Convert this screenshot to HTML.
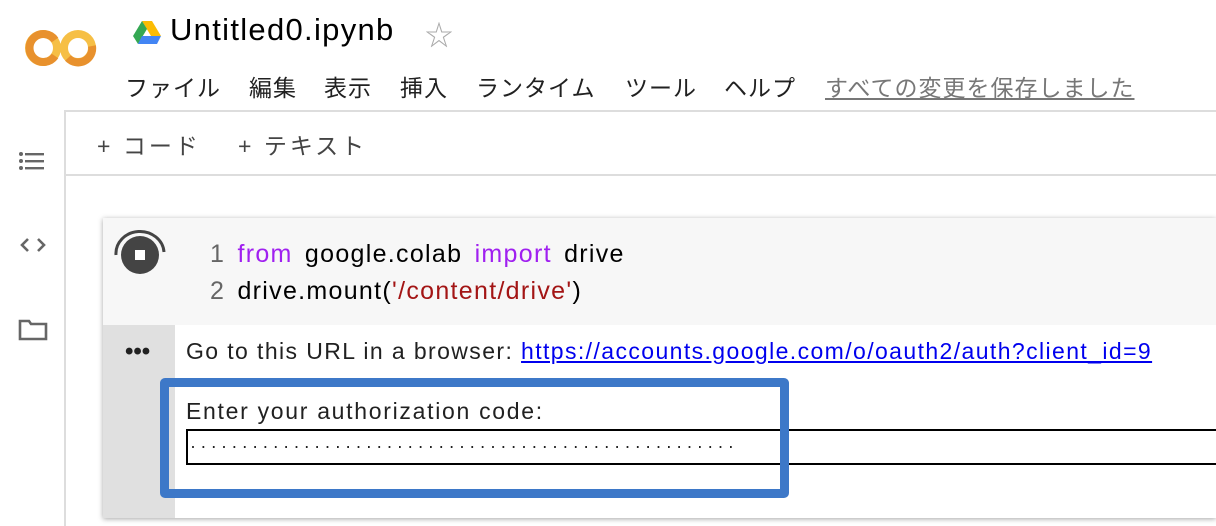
<!DOCTYPE html>
<html><head><meta charset="utf-8"><style>
*{margin:0;padding:0;box-sizing:border-box}
body{width:1216px;height:526px;overflow:hidden;background:#fff;position:relative;font-family:"Liberation Sans","Noto Sans CJK JP",sans-serif;color:#212121}
.a{position:absolute;white-space:nowrap}
.m{position:absolute;top:69px;font-size:23px;white-space:nowrap;letter-spacing:1px}
</style></head><body>
<svg class="a" style="left:22px;top:25px" width="78" height="46" viewBox="0 0 78 46">
<circle cx="21" cy="23" r="14" fill="none" stroke="#f6bf45" stroke-width="8"/>
<path d="M33 15 A14 14 0 1 0 33 31" fill="none" stroke="#e8912d" stroke-width="8"/>
<circle cx="56" cy="23" r="14" fill="none" stroke="#f6bf45" stroke-width="8"/>
<path d="M70 21 A14 14 0 0 1 46 33" fill="none" stroke="#e8912d" stroke-width="8"/>
</svg>
<svg class="a" style="left:132px;top:20px" width="30" height="24" viewBox="0 0 30 24">
<path d="M10 1h10l9 15h-10z" fill="#fbbc04"/><path d="M10 1L1 16l5 8 9-15z" fill="#34a853"/><path d="M6 24h19l4-8H10z" fill="#4285f4"/>
</svg>
<div class="a" style="left:170px;top:12px;font-size:31px;color:#000;letter-spacing:1.3px">Untitled0.ipynb</div>
<div class="a" style="left:425px;top:14px;font-size:28px;color:#aaa">☆</div>
<div class="m" style="left:125px">ファイル</div>
<div class="m" style="left:249px">編集</div>
<div class="m" style="left:324px">表示</div>
<div class="m" style="left:400px">挿入</div>
<div class="m" style="left:476px">ランタイム</div>
<div class="m" style="left:625px">ツール</div>
<div class="m" style="left:724px">ヘルプ</div>
<div class="m" style="left:825px;color:#777;text-decoration:underline">すべての変更を保存しました</div>
<div class="a" style="left:64px;top:110px;width:2px;height:416px;background:#ddd"></div>
<div class="a" style="left:64px;top:110px;width:1152px;height:2px;background:#ddd"></div>
<div class="a" style="left:64px;top:174px;width:1152px;height:2px;background:#ddd"></div>
<div class="a" style="left:97px;top:127px;font-size:23px;color:#444;letter-spacing:3px">+ コード</div>
<div class="a" style="left:238px;top:127px;font-size:23px;color:#444;letter-spacing:3px">+ テキスト</div>
<svg class="a" style="left:18px;top:150px" width="30" height="200" viewBox="0 0 30 200">
<g fill="#666"><circle cx="3" cy="4" r="2"/><circle cx="3" cy="11" r="2"/><circle cx="3" cy="18" r="2"/><rect x="7" y="3" width="19" height="2.4"/><rect x="7" y="10" width="19" height="2.4"/><rect x="7" y="17" width="19" height="2.4"/></g>
<path d="M10 89l-6 6 6 6M20 89l6 6-6 6" fill="none" stroke="#666" stroke-width="2.6"/>
<path d="M2 171h9l2 3h15v15H2z" fill="none" stroke="#666" stroke-width="2.6"/>
</svg>
<div class="a" style="left:103px;top:218px;width:1113px;height:300px;background:#fff;box-shadow:0 1px 5px rgba(0,0,0,.35)"></div>
<div class="a" style="left:103px;top:218px;width:1113px;height:107px;background:#f7f7f7"></div>
<div class="a" style="left:103px;top:325px;width:72px;height:193px;background:#e0e0e0"></div>
<svg class="a" style="left:113px;top:228px" width="60" height="50" viewBox="0 0 60 50">
<circle cx="27" cy="27" r="19" fill="#444"/><path d="M3 27A24 22 0 0 1 51 24" fill="none" stroke="#444" stroke-width="3"/><rect x="22" y="22" width="10" height="10" fill="#fff"/>
</svg>
<div class="a" style="left:210px;top:236px;font-size:25px;line-height:37px;color:#000;letter-spacing:1.3px;word-spacing:4px"><span style="color:#666">1</span> <span style="color:#a020f0">from</span> google.colab <span style="color:#a020f0">import</span> drive<br><span style="color:#666">2</span> drive.mount(<span style="color:#a31515">'/content/drive'</span>)</div>
<div class="a" style="left:125px;top:338px;font-size:24px;font-weight:bold">•••</div>
<div class="a" style="left:186px;top:338px;font-size:23px;letter-spacing:1.4px">Go to this URL in a browser: <span style="color:#00e;text-decoration:underline">https://accounts.google.com/o/oauth2/auth?client_id=9</span></div>
<div class="a" style="left:186px;top:398px;font-size:23px;letter-spacing:1.7px">Enter your authorization code:</div>
<div class="a" style="left:186px;top:429px;width:1040px;height:36px;border:2px solid #000;background:#fff"></div>
<div class="a" style="left:190px;top:436px;font-size:18px;letter-spacing:4.35px">·····················································</div>
<div class="a" style="left:160px;top:378px;width:629px;height:120px;border:9px solid #3d78c8;border-radius:5px"></div>
</body></html>
